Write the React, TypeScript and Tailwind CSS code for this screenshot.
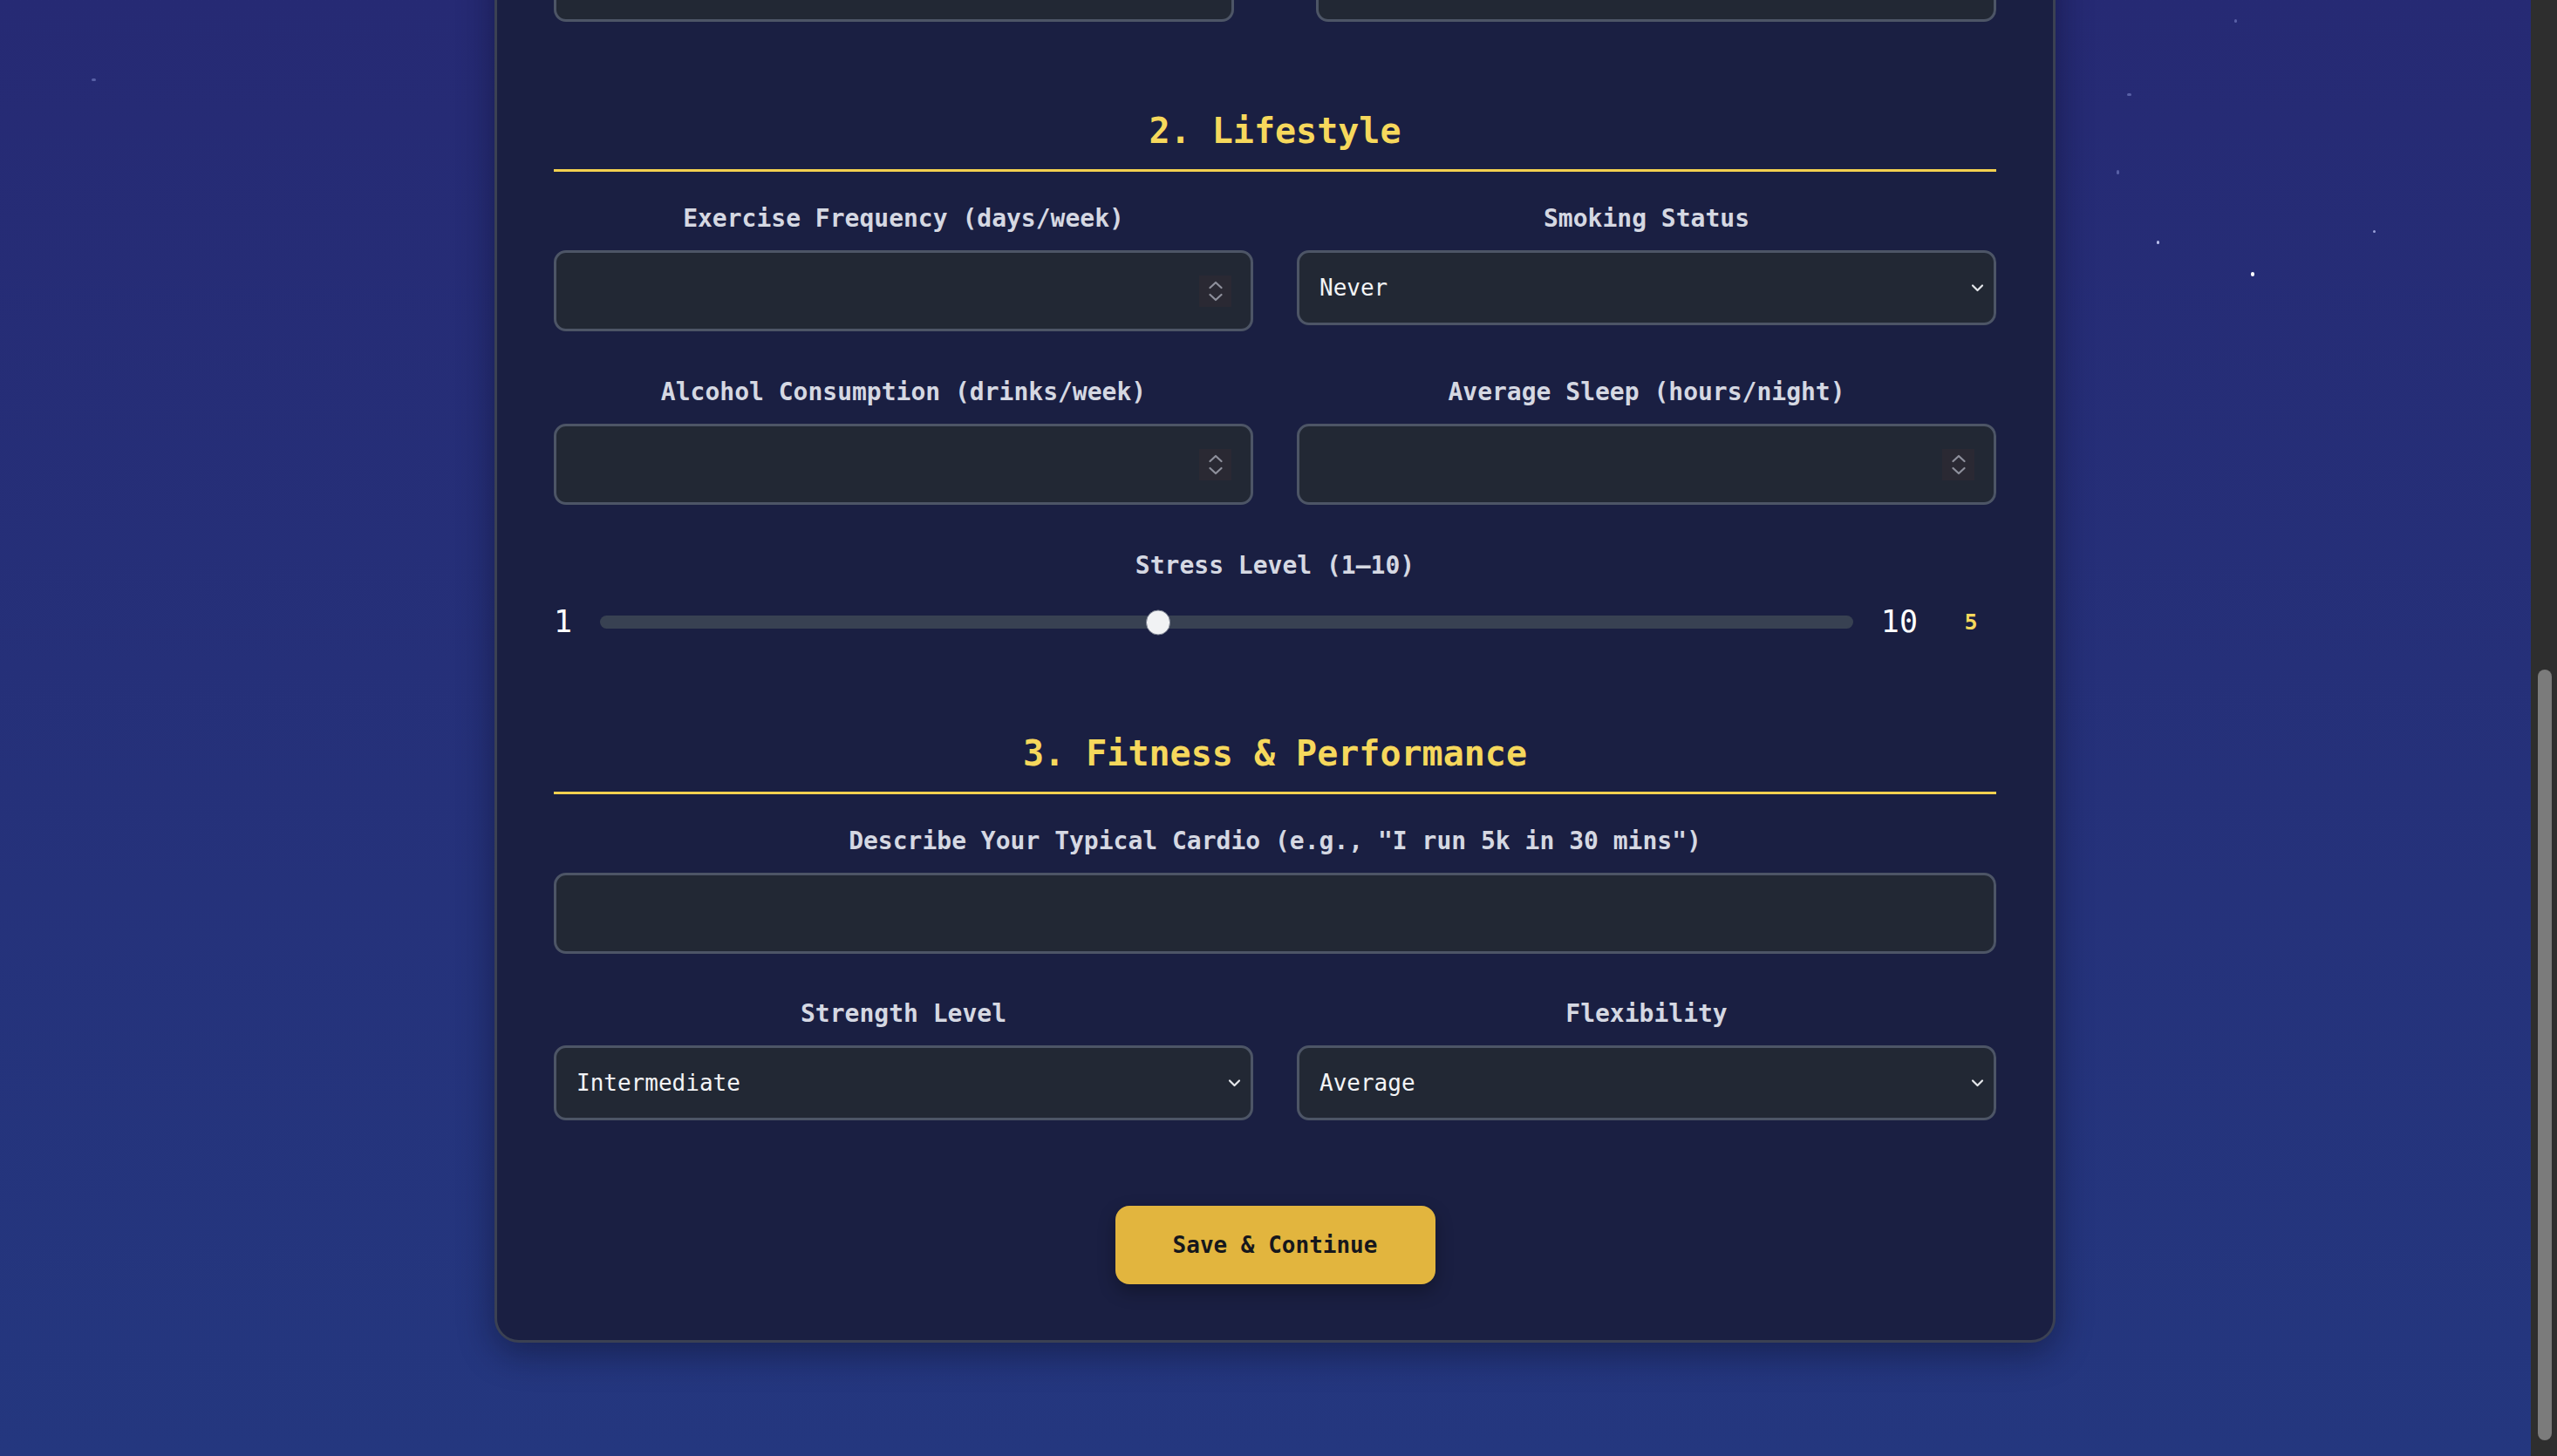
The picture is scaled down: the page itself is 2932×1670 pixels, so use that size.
import React from "react";

const stars = [
  { x: 105, y: 90, w: 5, h: 3, c: "#5860a6" },
  { x: 2562, y: 22, w: 3, h: 4, c: "#5860a6" },
  { x: 2439, y: 107, w: 5, h: 3, c: "#5860a6" },
  { x: 2427, y: 195, w: 3, h: 5, c: "#5860a6" },
  { x: 2473, y: 276, w: 3, h: 4, c: "#b9bfea" },
  { x: 2581, y: 312, w: 4, h: 5, c: "#ffffff" },
  { x: 2721, y: 264, w: 3, h: 3, c: "#9aa1d9" },
];

function Spinner() {
  return (
    <div className="w-[37px] h-[36px] bg-[#2a2933] flex items-center justify-center">
      <svg width="16" height="24" viewBox="0 0 16 24" fill="none" stroke="#8e909c" strokeWidth="2.2" strokeLinecap="round" strokeLinejoin="round">
        <polyline points="1.5,8 8,2 14.5,8" />
        <polyline points="1.5,16 8,22 14.5,16" />
      </svg>
    </div>
  );
}

function NumberBox() {
  return (
    <div className="h-[93px] rounded-[14px] border-[3px] border-[#4d5566] bg-[#222834] flex items-center justify-end pr-[22px]">
      <Spinner />
    </div>
  );
}

function TextBox() {
  return <div className="h-[93px] rounded-[14px] border-[3px] border-[#4d5566] bg-[#222834]" />;
}

function SelectBox({ value }: { value: string }) {
  return (
    <div className="h-[86px] rounded-[14px] border-[3px] border-[#4d5566] bg-[#222834] flex items-center justify-between pl-[23px] pr-[11px] text-[26px] text-[#f3f4f6]">
      <span>{value}</span>
      <svg width="15" height="10" viewBox="0 0 15 10" fill="none" stroke="#e5e7eb" strokeWidth="2.2" strokeLinecap="round" strokeLinejoin="round">
        <polyline points="2,2.5 7.5,8 13,2.5" />
      </svg>
    </div>
  );
}

function Label({ children }: { children: React.ReactNode }) {
  return (
    <div className="text-center text-[28px] leading-[34px] font-bold text-[#d5d8e2] mb-[19px] whitespace-pre">
      {children}
    </div>
  );
}

function Title({ children, mt }: { children: React.ReactNode; mt: string }) {
  return (
    <h2 className={`${mt} text-center text-[40px] leading-[48px] font-bold text-[#f6d85c] pb-[20px] border-b-[3px] border-[#f3d04f]`}>
      {children}
    </h2>
  );
}

export default function App() {
  const stress = 5;
  const pct = (stress - 1) / 9;
  return (
    <div className="h-[1670px] w-full flex overflow-hidden font-['DejaVu_Sans_Mono',monospace]">
      <div className="relative flex-1 overflow-hidden bg-linear-to-b from-[#262a74] to-[#24377f]">
        {stars.map((s, i) => (
          <div
            key={i}
            className="absolute rounded-full"
            style={{ left: s.x, top: s.y, width: s.w, height: s.h, background: s.c }}
          />
        ))}
        <div className="relative ml-[567px] mt-[-71px] w-[1790px] rounded-[28px] border-[3px] border-[#3b4153] bg-[#1a1f42] px-[65px] pb-[64px] shadow-[0_12px_40px_rgba(8,10,30,0.45)]">
          <div className="grid grid-cols-2 gap-x-[94px]">
            <TextBox />
            <TextBox />
          </div>

          <Title mt="mt-[101px]">2. Lifestyle</Title>
          <div className="mt-[37px] grid grid-cols-2 gap-x-[50px] gap-y-[53px] items-start">
            <div>
              <Label>Exercise Frequency (days/week)</Label>
              <NumberBox />
            </div>
            <div>
              <Label>Smoking Status</Label>
              <SelectBox value="Never" />
            </div>
            <div>
              <Label>Alcohol Consumption (drinks/week)</Label>
              <NumberBox />
            </div>
            <div>
              <Label>Average Sleep (hours/night)</Label>
              <NumberBox />
            </div>
            <div className="col-span-2">
              <Label>Stress Level (1–10)</Label>
              <div className="h-[57px] flex items-center gap-[32px]">
                <span className="text-[35px] leading-none text-white">1</span>
                <div className="relative flex-1 h-[15px] rounded-full bg-[#384152]">
                  <div
                    className="absolute top-1/2 -translate-y-1/2 w-[28px] h-[29px] rounded-full bg-[#f1f2f4] border border-[#7b8190]"
                    style={{ left: `calc(${pct} * (100% - 28px))` }}
                  />
                </div>
                <span className="text-[35px] leading-none text-white">10</span>
                <span className="w-[58px] text-center text-[25px] leading-none font-bold text-[#f6d85c]">{stress}</span>
              </div>
            </div>
          </div>

          <Title mt="mt-[98px]">3. Fitness &amp; Performance</Title>
          <div className="mt-[37px] grid grid-cols-2 gap-x-[50px] gap-y-[52px] items-start">
            <div className="col-span-2">
              <Label>Describe Your Typical Cardio (e.g., "I run 5k in 30 mins")</Label>
              <TextBox />
            </div>
            <div>
              <Label>Strength Level</Label>
              <SelectBox value="Intermediate" />
            </div>
            <div>
              <Label>Flexibility</Label>
              <SelectBox value="Average" />
            </div>
          </div>

          <div className="mt-[98px] flex justify-center">
            <button className="w-[367px] h-[90px] rounded-[16px] bg-[#e2b53e] text-[26px] font-bold text-[#16171c] shadow-[0_8px_20px_rgba(0,0,0,0.3)]">
              Save &amp; Continue
            </button>
          </div>
        </div>
      </div>
      <div className="w-[30px] h-full bg-[#2e2e2e] pt-[768px] pl-[8px]">
        <div className="w-[16px] h-[884px] rounded-full bg-[#7b7b7b]" />
      </div>
    </div>
  );
}
